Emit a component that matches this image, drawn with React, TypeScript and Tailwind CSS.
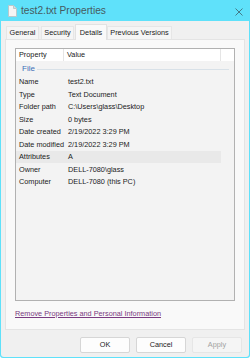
const rows: [string, string][] = [
  ['Name', 'test2.txt'],
  ['Type', 'Text Document'],
  ['Folder path', 'C:\\Users\\glass\\Desktop'],
  ['Size', '0 bytes'],
  ['Date created', '2/19/2022 3:29 PM'],
  ['Date modified', '2/19/2022 3:29 PM'],
  ['Attributes', 'A'],
  ['Owner', 'DELL-7080\\glass'],
  ['Computer', 'DELL-7080 (this PC)'],
];

function DocIcon() {
  return (
    <svg width="9" height="12" viewBox="0 0 9 12" className="shrink-0">
      <path d="M0.5 0.5 H5.5 L8.5 3.5 V11.5 H0.5 Z" fill="#f4f4f4" stroke="#b9c9cc" />
      <path d="M5.5 0.5 V3.5 H8.5" fill="#dcdcdc" stroke="#b9c9cc" />
    </svg>
  );
}

function CloseIcon() {
  return (
    <svg width="8" height="8" viewBox="0 0 8 8">
      <path d="M0.5 0.5 L7.5 7.5 M7.5 0.5 L0.5 7.5" stroke="#3f6f7a" strokeWidth="0.9" />
    </svg>
  );
}

export default function App() {
  const font = { fontFamily: '"Liberation Sans", Arial, sans-serif' };

  return (
    <div className="w-[250px] h-[358px] bg-[#5fe1fa] p-px flex flex-col rounded-b-[3px]" style={font}>
      {/* title bar */}
      <div className="h-[20px] flex items-center pl-[7px] pr-[6px] shrink-0">
        <DocIcon />
        <span className="ml-[4px] text-[10.2px] text-[#465a5f] leading-none pt-[1px]">test2.txt Properties</span>
        <div className="ml-auto pt-[1px] flex">
          <CloseIcon />
        </div>
      </div>

      {/* body */}
      <div className="flex-1 bg-[#f0f0f0] flex flex-col pt-[3px] px-[4px] pb-[4px] rounded-b-[3px] text-[7.3px] text-[#1b1b1b]">
        {/* tabs */}
        <div className="h-[15px] flex items-end shrink-0">
          <div className="ml-[1px] w-[33px] h-[13px] bg-[#f5f5f5] border border-b-0 border-[#e6e6e6] flex items-center justify-center leading-none">General</div>
          <div className="ml-[2px] w-[33px] h-[13px] bg-[#f5f5f5] border border-b-0 border-[#e6e6e6] flex items-center justify-center leading-none">Security</div>
          <div className="ml-[1px] w-[32px] h-[16px] -mb-px bg-[#f9f9f9] border border-b-0 border-[#e2e2e2] flex items-center justify-center leading-none relative z-10">Details</div>
          <div className="w-[65px] h-[13px] bg-[#f5f5f5] border border-b-0 border-[#e6e6e6] flex items-center justify-center leading-none">Previous Versions</div>
        </div>

        {/* panel */}
        <div className="h-[291px] bg-[#f9f9f9] border border-[#e4e4e4] flex flex-col pt-[8px] px-[9px] shrink-0">
          <div className="h-[253px] border border-[#b1b1b1] bg-[#f3f3f3] flex flex-col shrink-0">
            {/* header */}
            <div className="h-[12px] bg-white flex leading-none shrink-0">
              <div className="w-[48px] border-r border-[#e5e5e5] flex items-center pl-[3px]">Property</div>
              <div className="w-[157px] border-r border-[#e5e5e5] flex items-center pl-[3px]">Value</div>
              <div className="flex-1" />
            </div>
            {/* group */}
            <div className="h-[14.5px] flex items-center pt-[2px] pl-[6px] pr-[5px] shrink-0">
              <span className="text-[#3d6fb8] text-[8px] leading-none">File</span>
              <div className="ml-[2px] flex-1 h-px bg-[#d8e1e8]" />
            </div>
            {/* rows */}
            {rows.map(([k, v]) => (
              <div
                key={k}
                className={`h-[12.5px] w-[205px] flex items-center leading-none shrink-0 ${k === 'Attributes' ? 'bg-[#e9e9e9]' : ''}`}
              >
                <div className="w-[49px] pl-[3px] whitespace-nowrap">{k}</div>
                <div className="pl-[3px] whitespace-nowrap">{v}</div>
              </div>
            ))}
          </div>
          <div className="mt-[8px] leading-[10px] text-[#7a3a80] underline underline-offset-1">
            Remove Properties and Personal Information
          </div>
        </div>

        {/* buttons */}
        <div className="mt-[7px] h-[16px] flex justify-end gap-[6px] pr-[3px] shrink-0">
          <div className="w-[50px] h-[16px] bg-[#fdfdfd] border border-[#d6d6d6] rounded-[2px] flex items-center justify-center leading-none">OK</div>
          <div className="w-[50px] h-[16px] bg-[#fdfdfd] border border-[#d6d6d6] rounded-[2px] flex items-center justify-center leading-none">Cancel</div>
          <div className="w-[50px] h-[16px] bg-[#f5f5f5] border border-[#e6e6e6] rounded-[2px] flex items-center justify-center leading-none text-[#a3a3a3]">Apply</div>
        </div>
      </div>
    </div>
  );
}
